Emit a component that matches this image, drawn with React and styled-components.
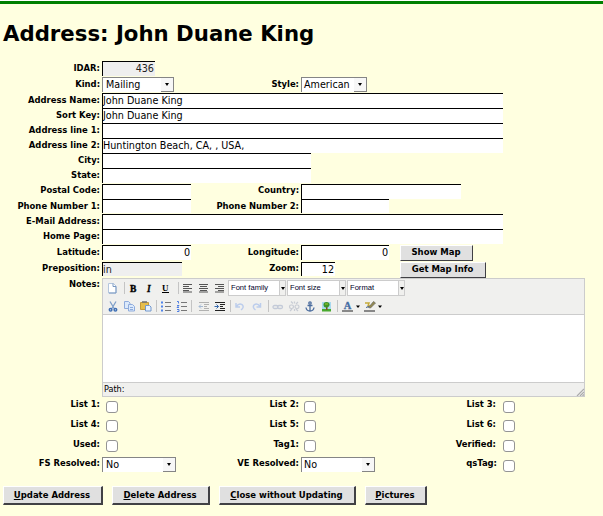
import React from "react";
import styled, { createGlobalStyle } from "styled-components";

const Global = createGlobalStyle`
  * { box-sizing: border-box; }
  body {
    margin: 0;
    background: #ffffe0;
    color: #000;
    font-family: "DejaVu Sans Condensed", "DejaVu Sans", sans-serif;
    font-stretch: condensed;
  }
`;

const Page = styled.main`
  width: 603px;
  height: 516px;
  overflow: hidden;
  border-top: 1px solid #fff;
`;

const Rule = styled.div`
  height: 3px;
  background: #008000;
`;

const Title = styled.h1`
  margin: 0;
  height: 57px;
  padding: 17px 0 0 3px;
  font: bold 21.25px/26px "DejaVu Sans", sans-serif;
  font-stretch: normal;
  white-space: nowrap;
`;

const Row = styled.div`
  display: grid;
  grid-template-columns: 102px 1fr;
  height: ${(p) => p.$h || 15}px;
`;

const Cell = styled.div`
  display: flex;
  align-items: flex-start;
  min-width: 0;
`;

const Label = styled.label`
  height: 12px;
  flex: none;
  width: ${(p) => p.$w || 102}px;
  padding: ${(p) => p.$top ?? 1}px 2px 0 0;
  text-align: right;
  font-size: 9.4px;
  line-height: 12px;
  font-weight: bold;
  white-space: nowrap;
`;

const Input = styled.input`
  width: ${(p) => p.$w}px;
  height: ${(p) => p.$h || 15}px;
  flex: none;
  margin: 0;
  padding: 0 1px ${(p) => (p.$h ? 0 : 2)}px 0;
  border: solid #000;
  border-width: 1px 0 0 1px;
  border-radius: 0;
  outline: 0;
  background: ${(p) => (p.$muted ? "#efefef" : "#fff")};
  color: ${(p) => (p.$muted ? "#222" : "#000")};
  font: 10.7px/12px "DejaVu Sans Condensed", "DejaVu Sans", sans-serif;
  font-stretch: condensed;
  text-align: ${(p) => (p.$right ? "right" : "left")};
`;

const SelectBox = styled.div`
  display: flex;
  flex: none;
  width: ${(p) => p.$w}px;
  height: 15px;
  border: solid #858585;
  border-width: 1px 1px 0 1px;
  background: #fff;
  font-size: 10.67px;
  line-height: 13px;
`;

const SelectText = styled.span`
  flex: 1;
  padding-left: ${(p) => p.$pad ?? 3}px;
`;

const SelectArrow = styled.span`
  display: flex;
  width: 12px;
  align-items: center;
  justify-content: center;
  background: #f7f7f7;
  border-bottom: 1px solid #858585;
`;

const Triangle = styled.span`
  width: 0;
  height: 0;
  border: 2px solid transparent;
  border-top: 3px solid #000;
  border-bottom: 0;
`;

const Button = styled.button`
  width: ${(p) => p.$w}px;
  height: ${(p) => p.$h}px;
  flex: none;
  margin: 0;
  padding: 0 1px ${(p) => (p.$key ? 0 : 2)}px 0;
  border-style: solid;
  border-width: 1px ${(p) => p.$edge || 1}px ${(p) => p.$edge || 1}px 1px;
  border-color: #fff #404044 #404044 #fff;
  border-radius: 0;
  background: #e0e0e0;
  color: #000;
  font: bold 9.45px/12px "DejaVu Sans Condensed", "DejaVu Sans", sans-serif;
  font-stretch: condensed;
  white-space: nowrap;

  &::first-letter {
    text-decoration: ${(p) => (p.$key ? "underline" : "none")};
    text-underline-offset: 1px;
  }
`;

const ButtonGap = styled.span`
  width: ${(p) => p.$w}px;
  flex: none;
`;

const Editor = styled.section`
  width: 483px;
  height: 119px;
  border: 1px solid #ccc;
  background: #fff;
  display: flex;
  flex-direction: column;
`;

const Toolbar = styled.div`
  height: 36px;
  padding-left: 1px;
  background: #f0f0ee;
  border-bottom: 1px solid #ccc;
`;

const ToolRow = styled.div`
  display: flex;
  align-items: center;
  height: ${(p) => p.$h}px;
`;

const Tool = styled.span`
  width: ${(p) => p.$w || 16}px;
  height: 16px;
  flex: none;
  svg { display: block; width: 100%; height: 16px; }
`;

const Sep = styled.span`
  width: ${(p) => p.$w || 5}px;
  height: 12px;
  flex: none;
  margin-right: ${(p) => p.$gap || 0}px;
  border-right: 1px solid #c4c4c4;
`;

const ToolSelect = styled.span`
  display: flex;
  align-self: flex-start;
  width: ${(p) => p.$w || 58}px;
  height: 16px;
  margin: 1px 0 0 ${(p) => p.$ml || 2}px;
  border: 1px solid #ccc;
  background: #fff;
  font: 7.6px/13px "Liberation Sans", Arial, sans-serif;
  color: #000028;
  white-space: nowrap;
`;

const ToolSelectText = styled.span`
  flex: 1;
  padding-left: 2px;
`;

const ToolSelectArrow = styled.span`
  display: flex;
  align-items: center;
  justify-content: center;
  width: 6px;
  background: #f0f0ee;
  border-left: 1px solid #ccc;
`;

const EditArea = styled.div`
  flex: 1;
`;

const Status = styled.div`
  display: flex;
  justify-content: space-between;
  align-items: flex-end;
  height: 14px;
  padding-left: 1px;
  border-top: 1px solid #ccc;
  background: #f0f0ee;
  font-size: 9px;
  line-height: 13px;
  svg { display: block; }
`;

const Check = styled.input.attrs({ type: "checkbox" })`
  appearance: none;
  width: 12px;
  height: 12px;
  flex: none;
  margin: ${(p) => p.$top}px 0 0 ${(p) => p.$left}px;
  border: 1px solid #949494;
  border-radius: 3px;
  background: #fff;
`;

const Actions = styled.footer`
  display: flex;
  gap: 9px;
  padding: 11px 0 0 3px;
`;

function Select({ value, w, pad }) {
  return (
    <SelectBox $w={w}>
      <SelectText $pad={pad}>{value}</SelectText>
      <SelectArrow><Triangle /></SelectArrow>
    </SelectBox>
  );
}

function TextRow({ label, value = "", w = 401, h }) {
  return (
    <Row $h={h}>
      <Label>{label}</Label>
      <Input $w={w} defaultValue={value} />
    </Row>
  );
}

const ICONS = {
  doc: <><path d="M4.500 3.500h5l2.500 2.500v7h-7.500z" fill="#fff" stroke="#b4c6dd" /><path d="M9 3.500v3h3v6.500h-7" fill="none" stroke="#7898c2" /></>,
  bold: <text x="5" y="12" fontSize="9.500" fontWeight="bold" fontFamily="Liberation Serif, serif" stroke="#000" strokeWidth=".4">B</text>,
  italic: <text x="6" y="12" fontSize="9.500" fontWeight="bold" fontStyle="italic" fontFamily="Liberation Serif, serif" stroke="#000" strokeWidth=".3">I</text>,
  underline: <><text x="5" y="11" fontSize="9" fontWeight="bold" fontFamily="Liberation Serif, serif">U</text><path d="M5 12.500h7" stroke="#000" /></>,
  left: <path d="M4 4.500h9M4 6.500h6M4 8.500h9M4 10.500h6M4 12h9" stroke="#555" strokeWidth="1.200" />,
  center: <path d="M4 4.500h9M5 6.500h7M4 8.500h9M5 10.500h7M4 12h9" stroke="#555" strokeWidth="1.200" />,
  right: <path d="M4 4.500h9M7 6.500h6M4 8.500h9M7 10.500h6M4 12h9" stroke="#555" strokeWidth="1.200" />,
  cut: <><path d="M6 3.500l4.500 7.500M12 3.500L7.500 11" stroke="#7f9fc9" strokeWidth="1.300" /><g fill="none" stroke="#3f6fb5" strokeWidth="1.500"><circle cx="6.600" cy="11.700" r="1.300" /><circle cx="11.400" cy="11.700" r="1.300" /></g></>,
  copy: <g fill="#dbe9fb" stroke="#8eabdc"><path d="M4.500 3.500h4l1.500 1.500v5.500h-5.500z" /><path d="M8.500 6.500h4l2 2v4.500h-6z" /><path d="M10 9.500h3M10 11.500h3" /></g>,
  paste: <><path d="M4.500 4.500h8v7h-8z" fill="#e6bd4b" stroke="#c49a3c" /><path d="M6 4h5" stroke="#777" strokeWidth="1.600" /><path d="M9.500 7.500h4l1.500 1.500v4h-5.500z" fill="#e8f2ff" stroke="#7298cc" /></>,
  ul: <><path d="M8 4.500h6M8 8.500h6M8 12.500h6" stroke="#777" /><path d="M4 4.500h2M4 8.500h2M4 12.500h2" stroke="#4f83ea" strokeWidth="2" /></>,
  ol: <><path d="M8 4.500h6M8 8.500h6M8 12.500h6" stroke="#777" /><path d="M4 3.500h1.500v2M4 7.500h2l-2 2h2M4 11.500h2v2h-2" fill="none" stroke="#3f73e0" strokeWidth=".9" /></>,
  outdent: <g opacity=".4"><path d="M4 4.500h10M9 6.500h5M9 8.500h3M9 10.500h5M4 12.500h10" stroke="#555" /><path d="M8 8.500h-4M6 6.500l-2 2 2 2" fill="none" stroke="#3669ad" /></g>,
  indent: <><path d="M4 4.500h10M9 6.500h5M9 8.500h3M9 10.500h5M4 12.500h10" stroke="#222" /><path d="M3.500 8.500h4M5.500 6.500l2 2-2 2" fill="none" stroke="#3669ad" /></>,
  undo: <path d="M5 5v4h4M5.500 8.500C8 4.500 13 6 12 9.500q-.5 1.500-2 2.500" fill="none" stroke="#bccdec" strokeWidth="1.500" />,
  redo: <path d="M13.500 5v4h-4M13 8.500C10.500 4.500 5.500 6 6.500 9.500q.5 1.500 2 2.500" fill="none" stroke="#bccdec" strokeWidth="1.500" />,
  link: <g fill="none" stroke="#c3cad8" strokeWidth="1.300"><rect x="4" y="7.500" width="5" height="3" rx="1.500" /><rect x="8.500" y="7.500" width="5" height="3" rx="1.500" /></g>,
  unlink: <g fill="none" stroke="#c8ccd4" strokeWidth="1.200"><rect x="3.500" y="7" width="4" height="3.500" rx="1.700" /><rect x="9" y="7" width="4" height="3.500" rx="1.700" /><path d="M5 3.500l2 2M8.500 3.500v2M12 4l-2 2M4 13l2-2M8.500 13v-2M12 13l-2-2" /></g>,
  anchor: <g fill="none" stroke="#4a6c9e" strokeWidth="1.300"><circle cx="8" cy="5" r="1.200" /><path d="M8 6.500v6.500M5.500 7.500h5M4 9.500c.3 2.500 2 3.500 4 3.500s3.700-1 4-3.500" /></g>,
  image: <><path d="M4 4h9v9h-9z" fill="#a9d9ef" /><path d="M4 11h9v2.500h-9z" fill="#48a92e" /><path d="M8 8h1.500v4h-1.500z" fill="#80521f" /><path d="M5.500 6.500q0-2.500 3-2.500t3 2.500-3 3-3-3z" fill="#3c9428" /><path d="M7 6h3" stroke="#a3c52c" /></>,
  color: <><text x="3.800" y="11" fontSize="10.500" fontWeight="bold" fontFamily="Liberation Serif, serif" fill="#456da3" stroke="#456da3" strokeWidth=".3">A</text><path d="M2 13h11" stroke="#888" strokeWidth="2" /></>,
  marker: <><path d="M3 5h4l-1 3h4" fill="none" stroke="#c5aa3a" strokeWidth="1.500" /><path d="M6.500 9.500l5-6 2 1.500-5 5z" fill="#948a50" stroke="#666" strokeWidth=".7" /><path d="M4 9.500l3-1" stroke="#42669b" /><path d="M2 13h11" stroke="#888" strokeWidth="2" /></>,
  caret: <path d="M0 7.500h4l-2 2.500z" fill="#000" />,
};

function Icon({ name, w = 16 }) {
  return <Tool $w={w}><svg viewBox={`0 0 ${w} 16`}>{ICONS[name]}</svg></Tool>;
}

function EditorSelect({ text, ml, w }) {
  return (
    <ToolSelect $ml={ml} $w={w}>
      <ToolSelectText>{text}</ToolSelectText>
      <ToolSelectArrow><Triangle /></ToolSelectArrow>
    </ToolSelect>
  );
}

function RichEditor() {
  return (
    <Editor>
      <Toolbar>
        <ToolRow $h={18}>
          <Icon name="doc" /><Sep />
          <Icon name="bold" /><Icon name="italic" /><Icon name="underline" /><Sep $w={6} />
          <Icon name="left" /><Icon name="center" /><Icon name="right" />
          <EditorSelect text="Font family" ml={1} w={58} />
          <EditorSelect text="Font size" ml={1} w={59} />
          <EditorSelect text="Format" ml={1} />
        </ToolRow>
        <ToolRow $h={18}>
          <Icon name="cut" /><Icon name="copy" /><Icon name="paste" /><Sep />
          <Icon name="ul" /><Icon name="ol" /><Sep $w={3} $gap={3} />
          <Icon name="outdent" /><Icon name="indent" /><Sep $w={4} />
          <Icon name="undo" /><Icon name="redo" w={17} /><Sep $w={5} />
          <Icon name="link" w={17} /><Icon name="unlink" /><Icon name="anchor" /><Icon name="image" /><Sep $w={4} $gap={2} />
          <Icon name="color" /><Icon name="caret" w={6} />
          <Icon name="marker" /><Icon name="caret" w={6} />
        </ToolRow>
      </Toolbar>
      <EditArea />
      <Status>
        <span>Path:</span>
        <svg width="8" height="8" viewBox="0 0 8 8"><path d="M1 8L8 1M4 8L8 4M6.500 8L8 6.500" stroke="#aaa" strokeWidth="1.200" /></svg>
      </Status>
    </Editor>
  );
}

function CheckRow({ labels, h, labelTop, checkTop }) {
  return (
    <Row $h={h}>
      <Label $top={labelTop}>{labels[0]}</Label>
      <Cell>
        <Check $left={4} $top={checkTop} />
        <Label $w={183} $top={labelTop}>{labels[1]}</Label>
        <Check $left={3} $top={checkTop} />
        <Label $w={182} $top={labelTop}>{labels[2]}</Label>
        <Check $left={5} $top={checkTop} />
      </Cell>
    </Row>
  );
}

export default function App() {
  return (
    <>
      <Global />
      <Page>
        <Rule />
        <Title>Address: John Duane King</Title>
        <Row $h={16}>
          <Label>IDAR:</Label>
          <Input $w={53} $muted $right readOnly defaultValue="436" />
        </Row>
        <Row $h={16}>
          <Label>Kind:</Label>
          <Cell>
            <Select w={72} value="Mailing" />
            <Label $w={127}>Style:</Label>
            <Select w={66} pad={2} value="American" />
          </Cell>
        </Row>
        <TextRow label="Address Name:" value="John Duane King" />
        <TextRow label="Sort Key:" value="John Duane King" />
        <TextRow label="Address line 1:" />
        <TextRow label="Address line 2:" value="Huntington Beach, CA, , USA," />
        <TextRow label="City:" w={209} />
        <TextRow label="State:" w={209} h={16} />
        <Row>
          <Label $top={0}>Postal Code:</Label>
          <Cell>
            <Input $w={89} />
            <Label $top={0} $w={110}>Country:</Label>
            <Input $w={160} />
          </Cell>
        </Row>
        <Row>
          <Label>Phone Number 1:</Label>
          <Cell>
            <Input $w={89} $h={14} />
            <Label $w={110}>Phone Number 2:</Label>
            <Input $w={88} $h={14} />
          </Cell>
        </Row>
        <TextRow label="E-Mail Address:" />
        <TextRow label="Home Page:" h={16} />
        <Row $h={17}>
          <Label>Latitude:</Label>
          <Cell>
            <Input $w={89} $right defaultValue="0" />
            <Label $w={110}>Longitude:</Label>
            <Input $w={88} $right defaultValue="0" />
            <ButtonGap $w={11} />
            <Button $w={73} $h={16}>Show Map</Button>
          </Cell>
        </Row>
        <Row $h={16}>
          <Label $top={0}>Preposition:</Label>
          <Cell>
            <Input $w={80} $h={14} $muted readOnly defaultValue="in" />
            <Label $top={0} $w={119}>Zoom:</Label>
            <Input $w={34} $h={14} $right defaultValue="12" />
            <ButtonGap $w={65} />
            <Button $w={86} $h={16}>Get Map Info</Button>
          </Cell>
        </Row>
        <Row $h={119}>
          <Label $top={0}>Notes:</Label>
          <RichEditor />
        </Row>
        <CheckRow h={21} labels={["List 1:", "List 2:", "List 3:"]} labelTop={1} checkTop={4} />
        <CheckRow h={20} labels={["List 4:", "List 5:", "List 6:"]} labelTop={0} checkTop={2} />
        <CheckRow h={19} labels={["Used:", "Tag1:", "Verified:"]} labelTop={0} checkTop={2} />
        <Row $h={18}>
          <Label $top={0}>FS Resolved:</Label>
          <Cell>
            <Select w={74} value="No" />
            <Label $top={0} $w={125}>VE Resolved:</Label>
            <Select w={74} pad={2} value="No" />
            <Label $top={0} $w={124}>qsTag:</Label>
            <Check $left={4} $top={3} />
          </Cell>
        </Row>
        <Actions>
          <Button $key $edge={2} $w={100} $h={19}>Update Address</Button>
          <Button $key $edge={2} $w={98} $h={19}>Delete Address</Button>
          <Button $key $edge={2} $w={137} $h={19}>Close without Updating</Button>
          <Button $key $edge={2} $w={62} $h={19}>Pictures</Button>
        </Actions>
      </Page>
    </>
  );
}
